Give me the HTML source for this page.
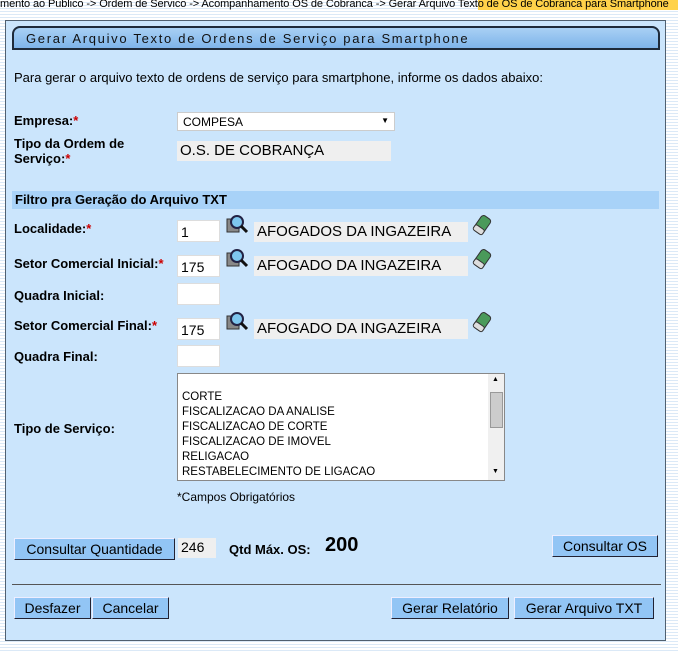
<!DOCTYPE html>
<html><head><style>
body{margin:0;width:678px;height:653px;overflow:hidden;font-family:"Liberation Sans",sans-serif;font-size:13px;color:#000;
background:repeating-linear-gradient(#fff 0 2px,#dbe9f7 2px 3px);position:relative}
.a{position:absolute}
.bc{top:-2px;left:0;font-size:11px;white-space:nowrap;letter-spacing:-0.1px}
.panel{left:5px;top:20px;width:661px;height:621px;background:#cbe5fc;border:1px solid #506070;box-sizing:border-box}
.title{left:12px;top:26px;width:648px;height:24px;box-sizing:border-box;border:2px solid #1e2a3a;border-radius:8px 8px 0 0;background:linear-gradient(#a8d0f4,#7fb4ea);font-size:13px;letter-spacing:1.7px;padding:3px 0 0 12px;color:#111}
.lbl{font-weight:bold;font-size:13px}
.req{color:#c00}
.inp{background:#fff;border:1px solid #ddd;box-sizing:border-box;height:22px;font-size:14px;padding:3px 3px}
.ro{background:#efefef;font-size:15px;height:20px;padding:1px 3px;box-sizing:border-box}
.btn{background:#92c5f5;border:1px solid #223;border-top-color:#eef;border-left-color:#eef;box-sizing:border-box;font-size:14px;text-align:center;padding-top:2px;height:22px}
.sec{left:12px;top:191px;width:647px;height:18px;background:#a8d2f8;font-weight:bold;padding:1px 0 0 3px;box-sizing:border-box}
</style></head><body>
<div class="a" style="left:478px;top:0;width:200px;height:10px;background:#ffd24a"></div>
<div class="a bc">mento ao Publico -&gt; Ordem de Servico -&gt; Acompanhamento OS de Cobranca -&gt; Gerar Arquivo Texto de OS de Cobranca para Smartphone</div>
<div class="a panel"></div>
<div class="a title">Gerar Arquivo Texto de Ordens de Serviço para Smartphone</div>
<div class="a" style="left:14px;top:70px">Para gerar o arquivo texto de ordens de serviço para smartphone, informe os dados abaixo:</div>
<div class="a lbl" style="left:14px;top:113px">Empresa:<span class="req">*</span></div>
<div class="a" style="left:177px;top:112px;width:218px;height:19px;background:#fff;border:1px solid #ccc;box-sizing:border-box;padding:2px 5px;font-size:12px">COMPESA<span style="position:absolute;right:5px;top:3px;font-size:8px">▼</span></div>
<div class="a lbl" style="left:14px;top:136px;line-height:15px">Tipo da Ordem de<br>Serviço:<span class="req">*</span></div>
<div class="a ro" style="left:177px;top:141px;width:214px">O.S. DE COBRANÇA</div>
<div class="a sec">Filtro pra Geração do Arquivo TXT</div>

<div class="a lbl" style="left:14px;top:221px">Localidade:<span class="req">*</span></div>
<div class="a inp" style="left:177px;top:220px;width:43px">1</div>
<div class="a ro" style="left:254px;top:222px;width:214px">AFOGADOS DA INGAZEIRA</div>

<div class="a lbl" style="left:14px;top:256px">Setor Comercial Inicial:<span class="req">*</span></div>
<div class="a inp" style="left:177px;top:255px;width:43px">175</div>
<div class="a ro" style="left:254px;top:256px;width:214px">AFOGADO DA INGAZEIRA</div>

<div class="a lbl" style="left:14px;top:288px">Quadra Inicial:</div>
<div class="a inp" style="left:177px;top:283px;width:43px"></div>

<div class="a lbl" style="left:14px;top:318px">Setor Comercial Final:<span class="req">*</span></div>
<div class="a inp" style="left:177px;top:318px;width:43px">175</div>
<div class="a ro" style="left:254px;top:319px;width:214px">AFOGADO DA INGAZEIRA</div>

<div class="a lbl" style="left:14px;top:349px">Quadra Final:</div>
<div class="a inp" style="left:177px;top:345px;width:43px"></div>

<svg class="a" style="left:226px;top:214px" width="280" height="125">
<defs><g id="m"><rect x="1" y="5" width="12" height="13" fill="#888" stroke="#333"/><circle cx="11" cy="8" r="6" fill="#7ec6ee" stroke="#224" stroke-width="2"/><line x1="15" y1="12" x2="21" y2="18" stroke="#111" stroke-width="3"/></g>
<g id="e" transform="rotate(-55 256 12)"><rect x="248" y="6" width="18" height="11" rx="3" fill="#4a9a5a" stroke="#333"/><rect x="248" y="6" width="6" height="11" rx="2" fill="#ddd" stroke="#333"/></g></defs>
<use href="#m"/><use href="#e"/>
<use href="#m" y="34"/><use href="#e" y="34"/>
<use href="#m" y="97"/><use href="#e" y="97"/>
</svg>

<div class="a lbl" style="left:14px;top:421px">Tipo de Serviço:</div>
<div class="a" style="left:177px;top:373px;width:328px;height:108px;background:#fff;border:1px solid #888;box-sizing:border-box;font-size:11.5px;line-height:15px;padding:16px 4px 0">CORTE<br>FISCALIZACAO DA ANALISE<br>FISCALIZACAO DE CORTE<br>FISCALIZACAO DE IMOVEL<br>RELIGACAO<br>RESTABELECIMENTO DE LIGACAO
<div style="position:absolute;right:0;top:0;width:16px;height:106px;background:#f0f0f0"><div style="position:absolute;left:2px;top:18px;width:11px;height:34px;background:#ccc;border:1px solid #999"></div><span style="position:absolute;left:4px;top:-2px;font-size:7px">▲</span><span style="position:absolute;left:4px;top:90px;font-size:7px">▼</span></div></div>
<div class="a" style="left:177px;top:490px;font-size:12px">*Campos Obrigatórios</div>

<div class="a btn" style="left:14px;top:538px;width:161px;height:22px">Consultar Quantidade</div>
<div class="a ro" style="left:178px;top:538px;width:38px;height:20px;font-size:14px">246</div>
<div class="a lbl" style="left:229px;top:542px">Qtd Máx. OS:</div>
<div class="a" style="left:325px;top:534px;font-size:20px;font-weight:bold">200</div>
<div class="a btn" style="left:552px;top:535px;width:106px">Consultar OS</div>

<div class="a" style="left:12px;top:584px;width:649px;height:1px;background:#555"></div>
<div class="a btn" style="left:14px;top:597px;width:77px">Desfazer</div>
<div class="a btn" style="left:92px;top:597px;width:77px">Cancelar</div>
<div class="a btn" style="left:391px;top:597px;width:118px">Gerar Relatório</div>
<div class="a btn" style="left:514px;top:597px;width:140px">Gerar Arquivo TXT</div>
</body></html>
